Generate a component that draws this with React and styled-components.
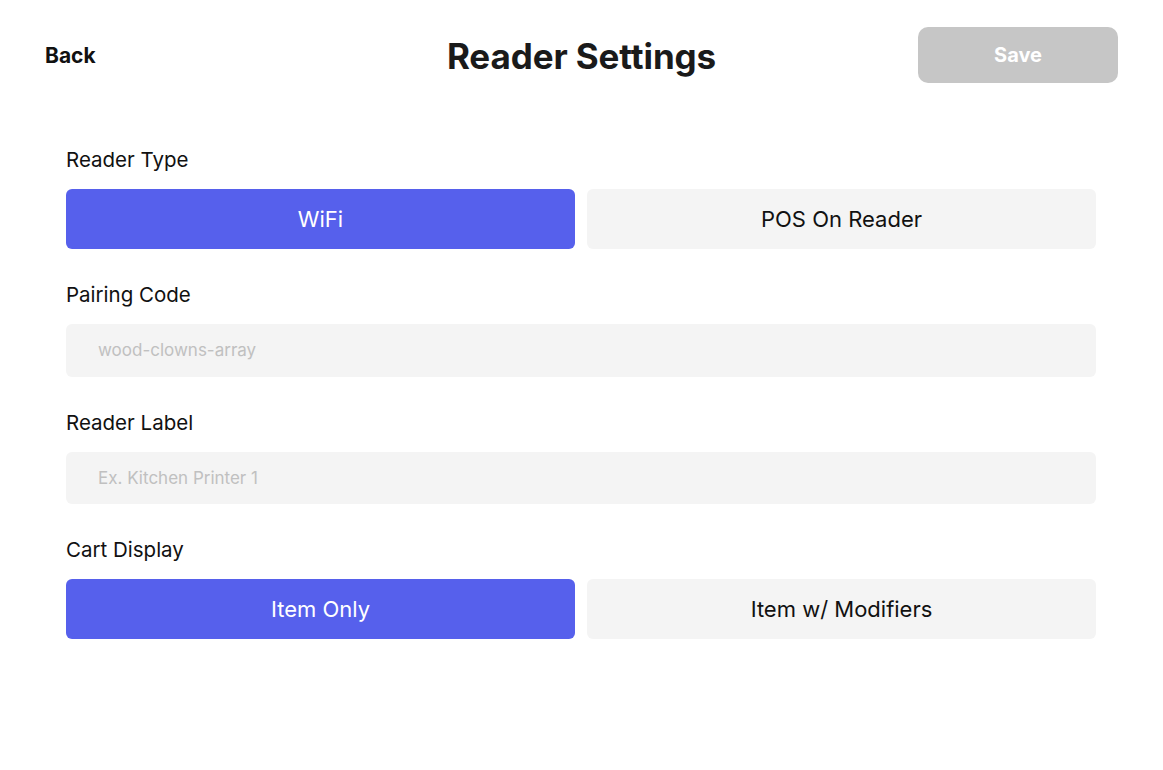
import React, {useState} from 'react';
import styled, {createGlobalStyle} from 'styled-components';

const GlobalStyle = createGlobalStyle`
  body {
    margin: 0;
    background: #ffffff;
    font-family: Inter, "Noto Sans", sans-serif;
    color: #111111;
  }
`;

const Page = styled.div`
  width: 1163px;
  height: 770px;
  background: #ffffff;
`;

const Header = styled.div`
  display: grid;
  grid-template-columns: 1fr auto 1fr;
  align-items: center;
  padding: 27px 45px 0 45px;
  height: 56px;
`;

const BackButton = styled.button`
  justify-self: start;
  border: none;
  background: none;
  padding: 0;
  font-family: inherit;
  font-size: 21px;
  font-weight: 700;
  color: #111111;
  cursor: pointer;
`;

const Title = styled.h1`
  margin: 2px 0 0 0;
  font-size: 35px;
  font-weight: 700;
  color: #1a1a1a;
  letter-spacing: -0.1px;
`;

const SaveButton = styled.button`
  justify-self: end;
  width: 200px;
  height: 56px;
  border: none;
  border-radius: 10px;
  background: #c6c6c6;
  color: #ffffff;
  font-family: inherit;
  font-size: 20px;
  font-weight: 700;
`;

const Form = styled.div`
  display: flex;
  flex-direction: column;
  padding: 65px 67px 0 66px;
`;

const Field = styled.div`
  display: flex;
  flex-direction: column;
  gap: 17px;
  margin-bottom: 34px;
`;

const Label = styled.div`
  font-size: 20.5px;
  line-height: 24px;
  color: #111111;
`;

const Segments = styled.div`
  display: grid;
  grid-template-columns: 1fr 1fr;
  gap: 12px;
`;

const Segment = styled.button`
  height: 60px;
  border: none;
  border-radius: 6px;
  font-family: inherit;
  font-size: 22px;
  background: ${p => (p.$active ? '#5660ec' : '#f4f4f4')};
  color: ${p => (p.$active ? '#ffffff' : '#111111')};
  cursor: pointer;
`;

const Input = styled.input`
  height: 52.5px;
  border: none;
  border-radius: 6px;
  background: #f4f4f4;
  padding: 0 32px;
  font-family: inherit;
  font-size: 17px;
  color: #111111;
  outline: none;

  &::placeholder {
    color: #c0c0c0;
  }
`;

function SegmentPicker({options, value, onChange}) {
  return (
    <Segments>
      {options.map(opt => (
        <Segment key={opt} $active={opt === value} onClick={() => onChange(opt)}>
          {opt}
        </Segment>
      ))}
    </Segments>
  );
}

export default function App() {
  const [readerType, setReaderType] = useState('WiFi');
  const [cartDisplay, setCartDisplay] = useState('Item Only');

  return (
    <Page>
      <GlobalStyle />
      <Header>
        <BackButton>Back</BackButton>
        <Title>Reader Settings</Title>
        <SaveButton disabled>Save</SaveButton>
      </Header>
      <Form>
        <Field>
          <Label>Reader Type</Label>
          <SegmentPicker
            options={['WiFi', 'POS On Reader']}
            value={readerType}
            onChange={setReaderType}
          />
        </Field>
        <Field>
          <Label>Pairing Code</Label>
          <Input placeholder="wood-clowns-array" />
        </Field>
        <Field>
          <Label>Reader Label</Label>
          <Input placeholder="Ex. Kitchen Printer 1" />
        </Field>
        <Field>
          <Label>Cart Display</Label>
          <SegmentPicker
            options={['Item Only', 'Item w/ Modifiers']}
            value={cartDisplay}
            onChange={setCartDisplay}
          />
        </Field>
      </Form>
    </Page>
  );
}
